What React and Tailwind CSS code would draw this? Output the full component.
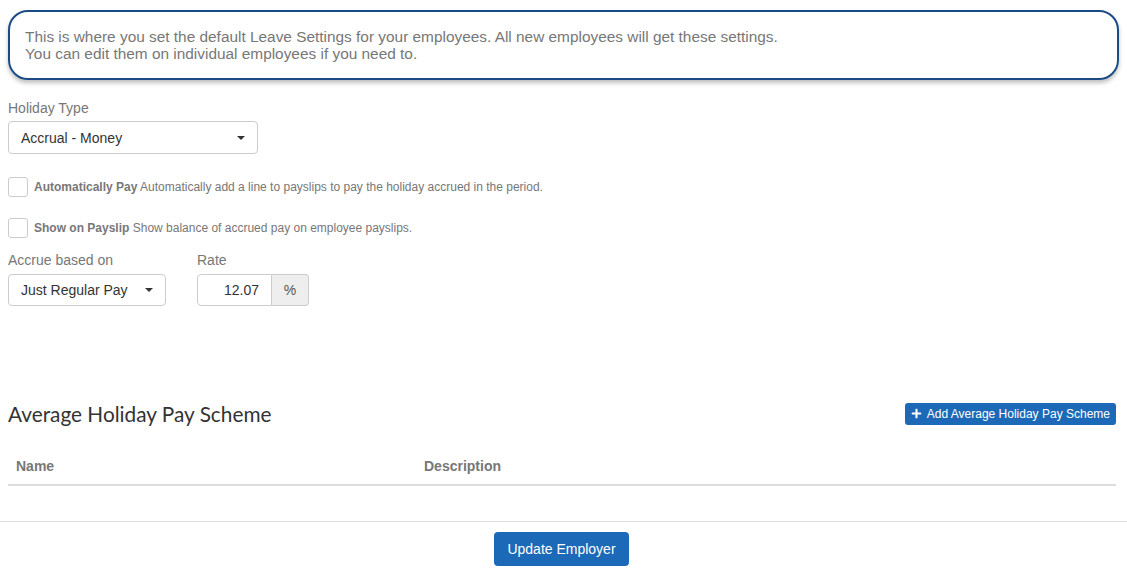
import { FaPlus } from 'react-icons/fa'

function Caret() {
  return <span className="inline-block w-0 h-0 border-x-[4px] border-x-transparent border-t-[4px] border-t-[#333]"></span>
}

function Checkbox({ title, text }) {
  return (
    <label className="flex items-center gap-[6px]">
      <span className="w-[20px] h-[20px] rounded-[3px] border border-[#ccc] bg-white shrink-0"></span>
      <span className="text-[12px] text-[#777]">
        <b className="font-bold">{title}</b> {text}
      </span>
    </label>
  )
}

export default function App() {
  return (
    <div className="min-h-[574px] bg-white font-['Liberation_Sans',Arial,sans-serif] text-[14px] leading-[20px] flex flex-col">
      <div className="px-2 pt-[10px] flex-1">
        {/* Info callout */}
        <div className="rounded-[20px] border-2 border-[#1b4b85] shadow-[0_3px_4px_rgba(0,0,0,0.25)] px-[15px] pt-[16px] pb-[16px] text-[15.4px] text-[#777] leading-[17px]">
          This is where you set the default Leave Settings for your employees. All new employees will get these settings.<br />
          You can edit them on individual employees if you need to.
        </div>

        {/* Holiday type */}
        <div className="mt-[18px]">
          <div className="text-[#777]">Holiday Type</div>
          <div className="mt-[3px] w-[250px] h-[33px] border border-[#ccc] rounded-[4px] flex items-center justify-between pl-[12px] pr-[12px] text-[#333]">
            <span>Accrual - Money</span>
            <Caret />
          </div>
        </div>

        <div className="mt-[23px] flex flex-col gap-[21px]">
          <Checkbox title="Automatically Pay" text="Automatically add a line to payslips to pay the holiday accrued in the period." />
          <Checkbox title="Show on Payslip" text="Show balance of accrued pay on employee payslips." />
        </div>

        <div className="mt-[12px] flex gap-[31px]">
          <div>
            <div className="text-[#777]">Accrue based on</div>
            <div className="mt-[4px] w-[158px] h-[32px] border border-[#ccc] rounded-[4px] flex items-center justify-between pl-[12px] pr-[12px] text-[#333]">
              <span>Just Regular Pay</span>
              <Caret />
            </div>
          </div>
          <div>
            <div className="text-[#777]">Rate</div>
            <div className="mt-[4px] flex h-[32px]">
              <div className="w-[75px] border border-[#ccc] rounded-l-[4px] flex items-center justify-end pr-[12px] text-[#333]">12.07</div>
              <div className="w-[37px] border border-l-0 border-[#ccc] rounded-r-[4px] bg-[#eee] flex items-center justify-center text-[#555]">%</div>
            </div>
          </div>
        </div>

        {/* Average holiday pay scheme */}
        <div className="mt-[94px] flex items-center justify-between">
          <h3 className="font-['Lato',sans-serif] text-[20.8px] leading-[28px] text-[#333]">Average Holiday Pay Scheme</h3>
          <button className="mr-[3px] -mt-[1px] h-[22px] px-[6px] rounded-[3px] bg-[#1c69b7] text-white text-[12px] flex items-center gap-[5px]">
            <FaPlus className="w-[11px] h-[11px]" />
            Add Average Holiday Pay Scheme
          </button>
        </div>

        <table className="mt-[20px] w-[1108px] text-left">
          <thead>
            <tr className="border-b-2 border-[#ddd]">
              <th className="w-[408px] px-2 py-2 font-bold text-[#777]">Name</th>
              <th className="px-2 py-2 font-bold text-[#777]">Description</th>
            </tr>
          </thead>
          <tbody></tbody>
        </table>
      </div>

      <div className="mt-[34px] border-t border-[#ddd] pt-[10px] pb-[8px] pr-[4px] flex justify-center">
        <button className="w-[135px] h-[34px] rounded-[4px] bg-[#1c69b7] text-white text-[14px]">Update Employer</button>
      </div>
    </div>
  )
}
